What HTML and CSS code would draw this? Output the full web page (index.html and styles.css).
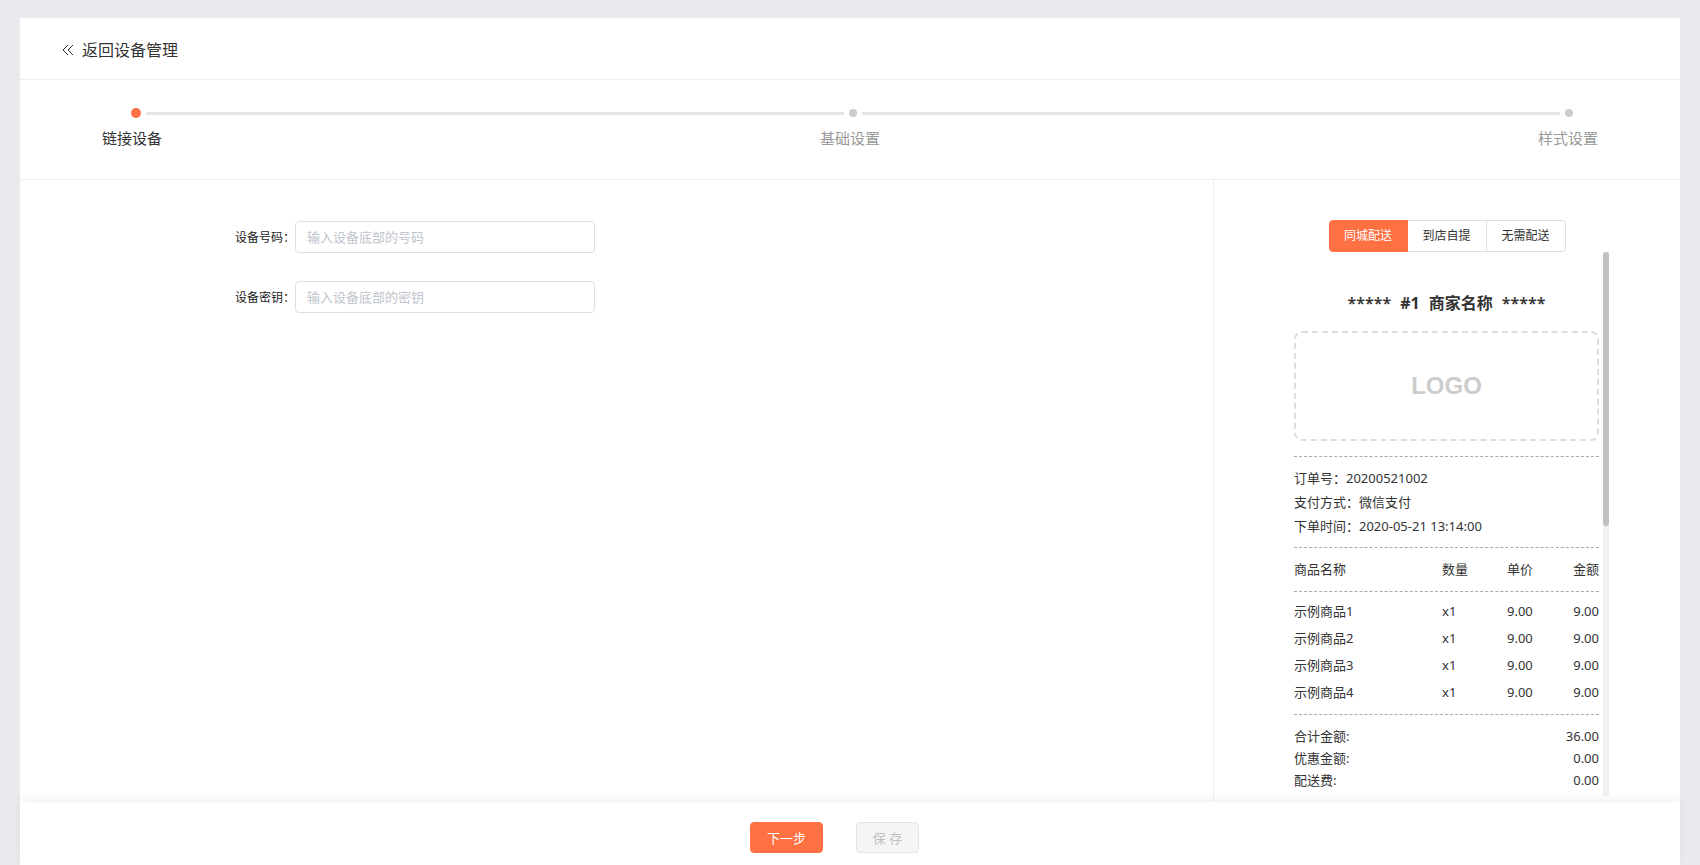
FILE: index.html
```html
<!DOCTYPE html>
<html lang="zh-CN">
<head>
    <meta charset="UTF-8">
    <meta name="viewport" content="width=device-width, initial-scale=1.0">
    <title>连接设备</title>
    <link rel="stylesheet" href="styles.css">
</head>
<body>

<div class="card">
    <div class="topbar">
        <a class="back" href="#">
            <svg width="12" height="12" viewBox="0 0 12 12"><polyline points="6,1 1,6 6,11" /><polyline points="11,1 6,6 11,11" /></svg>
            <span>返回设备管理</span>
        </a>
    </div>

    <div class="steps">
        <div class="step-track">
            <span class="dot active"></span><span class="line"></span>
            <span class="dot"></span><span class="line"></span>
            <span class="dot"></span>
        </div>
        <div class="step-labels">
            <span class="active">链接设备</span>
            <span>基础设置</span>
            <span>样式设置</span>
        </div>
    </div>

    <div class="main">
        <form class="form">
            <div class="form-row">
                <label for="sn">设备号码：</label>
                <input type="text" id="sn" placeholder="输入设备底部的号码">
            </div>
            <div class="form-row">
                <label for="key">设备密钥：</label>
                <input type="text" id="key" placeholder="输入设备底部的密钥">
            </div>
        </form>

        <aside class="preview">
            <div class="tabs">
                <span class="tab active">同城配送</span>
                <span class="tab">到店自提</span>
                <span class="tab">无需配送</span>
            </div>
            <div class="preview-scroll">
                <div class="receipt">
                    <div class="r-title"><span class="stars">*****</span><b>#1</b><b>商家名称</b><span class="stars">*****</span></div>
                    <div class="r-logo">LOGO</div>
                    <div class="r-block r-info">
                        <p>订单号：20200521002</p>
                        <p>支付方式：微信支付</p>
                        <p>下单时间：2020-05-21 13:14:00</p>
                    </div>
                    <div class="r-block r-head r-grid">
                        <span>商品名称</span><span>数量</span><span>单价</span><span>金额</span>
                    </div>
                    <div class="r-block r-items r-grid">
                        <span>示例商品1</span><span>x1</span><span>9.00</span><span>9.00</span>
                        <span>示例商品2</span><span>x1</span><span>9.00</span><span>9.00</span>
                        <span>示例商品3</span><span>x1</span><span>9.00</span><span>9.00</span>
                        <span>示例商品4</span><span>x1</span><span>9.00</span><span>9.00</span>
                    </div>
                    <div class="r-block r-total">
                        <p><span>合计金额:</span><span>36.00</span></p>
                        <p><span>优惠金额:</span><span>0.00</span></p>
                        <p><span>配送费:</span><span>0.00</span></p>
                        <p><span>实付金额:</span><span>36.00</span></p>
                    </div>
                    <div class="r-block r-info">
                        <p>收货人：张先生</p>
                        <p>联系电话：138****8888</p>
                        <p>收货地址：示例地址</p>
                        <p>备注：无</p>
                    </div>
                    <div class="r-block r-end">***** #1 完 *****</div>
                </div>
                <div class="scrollbar"><div class="thumb"></div></div>
            </div>
        </aside>
    </div>

    <div class="footer">
        <button class="btn primary" type="button">下一步</button>
        <button class="btn" type="button" disabled>保 存</button>
    </div>
</div>

</body>
</html>
```

FILE: styles.css
```css
/* 页面 */
html, body { height: 100%; }
body { margin: 0; padding: 18px 20px 0; box-sizing: border-box; background-color: #e9eaee; font-family: "Noto Sans", "Noto Sans CJK SC", sans-serif; color: #333; overflow: hidden; }
.card { background-color: #fff; height: 100%; display: flex; flex-direction: column; }

/* 顶部返回 */
.topbar { height: 62px; border-bottom: 1px solid #eee; display: flex; align-items: center; padding-left: 42px; flex-shrink: 0; box-sizing: border-box; }
.back { display: flex; align-items: center; gap: 8px; color: #333; text-decoration: none; font-size: 16px; line-height: 22px; padding-top: 3px; }
.back svg { fill: none; stroke: #333; stroke-width: 1; }

/* 步骤条 */
.steps { height: 99px; border-bottom: 1px solid #eee; flex-shrink: 0; }
.step-track { display: flex; align-items: center; height: 10px; margin-top: 28px; padding: 0 107px 0 111px; }
.dot { width: 8px; height: 8px; border-radius: 50%; background-color: #ccc; flex-shrink: 0; }
.dot.active { width: 10px; height: 10px; background-color: #ff7043; }
.line { flex: 1; height: 3px; background-color: #e6e6e6; margin: 0 5px; }
.step-labels { display: flex; justify-content: space-between; padding: 0 82px; margin-top: 10px; font-size: 15px; line-height: 20px; color: #999; }
.step-labels .active { color: #333; }

/* 主体 */
.main { flex: 1; display: flex; min-height: 0; }
.form { flex: 1; padding: 41px 0 0 175px; margin: 0; }
.form-row { display: flex; align-items: center; margin-bottom: 28px; }
.form-row label { width: 100px; text-align: right; font-size: 12px; color: #1a1a1a; }
.form-row input { width: 300px; height: 32px; box-sizing: border-box; border: 1px solid #dcdfe6; border-radius: 4px; padding: 0 11px; font-size: 13px; font-family: inherit; color: #333; outline: none; }
.form-row input::placeholder { color: #c0c4cc; }

/* 右侧预览 */
.preview { width: 467px; border-left: 1px solid #eee; padding-top: 40px; box-sizing: border-box; flex-shrink: 0; }
.tabs { display: flex; justify-content: center; }
.tab { width: 79px; height: 32px; box-sizing: border-box; border: 1px solid #dcdfe6; border-left: none; font-size: 12px; line-height: 30px; text-align: center; color: #333; }
.tab:first-child { border-left: 1px solid #dcdfe6; border-radius: 4px 0 0 4px; }
.tab:last-child { border-radius: 0 4px 4px 0; }
.tab.active { background-color: #ff7043; border-color: #ff7043; color: #fff; }
.preview-scroll { display: flex; gap: 4px; height: 544px; margin-left: 80px; width: 315px; overflow: hidden; }
.scrollbar { width: 6px; flex-shrink: 0; background-color: #f1f1f1; }
.thumb { height: 274px; background-color: #c1c1c1; border-radius: 3px; }

/* 小票 */
.receipt { width: 305px; flex-shrink: 0; font-size: 13px; color: #333; }
.receipt p { margin: 0; }
.r-title { text-align: center; font-size: 16px; line-height: 22px; margin-top: 40px; display: flex; justify-content: center; gap: 9px; }
.r-title b { font-weight: bold; }
.r-title .stars { font-weight: 600; }
.r-logo { height: 110px; margin-top: 17px; border: 2px dashed #ddd; border-radius: 8px; box-sizing: border-box; display: flex; align-items: center; justify-content: center; font-family: "Liberation Sans", Arial, sans-serif; font-weight: bold; font-size: 24px; color: #ccc; }
.r-block { border-top: 1px dashed #aaa; }
.r-info { margin-top: 15px; padding: 9px 0; line-height: 24px; }
.r-grid { display: grid; grid-template-columns: 148px 65px 1fr auto; }
.r-grid span:nth-child(4n) { text-align: right; }
.r-head { padding: 10px 0; line-height: 23px; }
.r-items { padding: 6px 0 8px; line-height: 27px; }
.r-total { padding: 10px 0; line-height: 22px; }
.r-total p { display: flex; justify-content: space-between; }
.r-total + .r-info { margin-top: 0; }
.r-end { text-align: center; padding: 16px 0 40px; }

/* 底部按钮 */
.footer { height: 63px; flex-shrink: 0; box-sizing: border-box; display: flex; align-items: flex-start; justify-content: center; gap: 33px; padding: 20px 31px 0 0; box-shadow: 0 -3px 8px rgba(0, 0, 0, 0.06); position: relative; z-index: 1; background-color: #fff; }
.btn { width: 63px; height: 31px; padding: 0; white-space: nowrap; border: 1px solid #e4e4e4; border-radius: 4px; background-color: #f5f5f5; color: #c0c0c0; font-size: 13px; font-family: inherit; cursor: not-allowed; }
.btn.primary { width: 73px; border-color: #ff7043; background-color: #ff7043; color: #fff; cursor: pointer; }
```
